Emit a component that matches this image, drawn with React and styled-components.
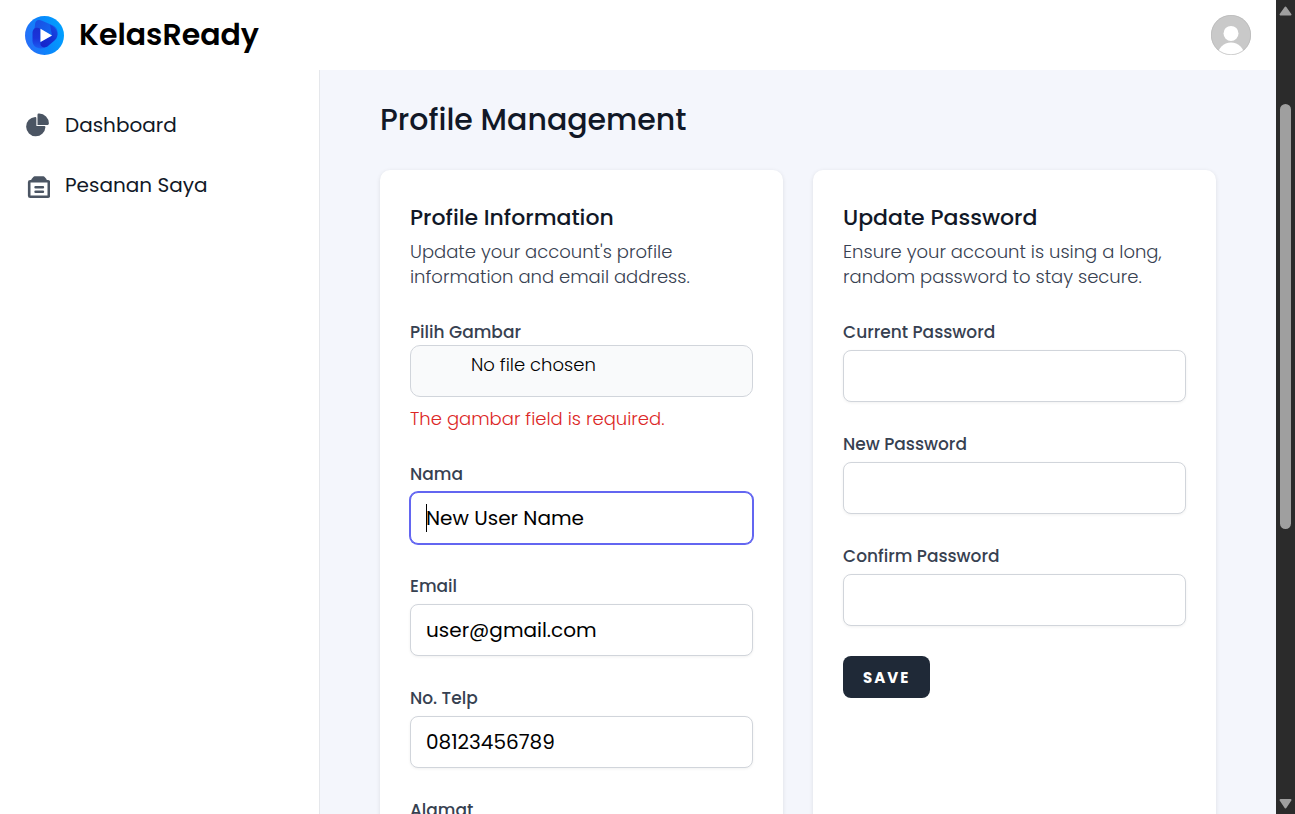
import React from "react";
import styled, { createGlobalStyle, css } from "styled-components";

const GlobalStyle = createGlobalStyle`
  *, *::before, *::after { box-sizing: border-box; }
  body {
    margin: 0;
    background: #ffffff;
    color: #111827;
    font-family: Poppins, Inter, "Open Sans", sans-serif;
  }
`;

const Window = styled.div`
  display: flex;
  height: 100vh;
  overflow: hidden;
`;

const Page = styled.div`
  flex: 1;
  min-width: 0;
  display: flex;
  flex-direction: column;
`;

const Header = styled.header`
  flex: none;
  display: flex;
  align-items: center;
  justify-content: space-between;
  height: 70px;
  padding: 0 25px;
  background: #ffffff;
`;

const Brand = styled.a`
  display: flex;
  align-items: center;
  gap: 15px;
  color: #000000;
  font-size: 30px;
  font-weight: 600;
  line-height: 40px;
  text-decoration: none;
`;

const AvatarButton = styled.button`
  display: block;
  width: 40px;
  height: 40px;
  padding: 0;
  border: 0;
  border-radius: 50%;
  background: none;
`;

const Body = styled.div`
  flex: 1;
  min-height: 0;
  display: flex;
`;

const Sidebar = styled.nav`
  flex: none;
  width: 320px;
  padding: 30px 15px;
  border-right: 1px solid #e5e7eb;
  background: #ffffff;
`;

const NavList = styled.ul`
  display: flex;
  flex-direction: column;
  gap: 10px;
  margin: 0;
  padding: 0;
  list-style: none;
`;

const NavLink = styled.a`
  display: flex;
  align-items: center;
  gap: 15px;
  height: 50px;
  padding: 0 10px;
  color: #111827;
  font-size: 20px;
  line-height: 30px;
  text-decoration: none;

  svg { flex: none; color: #4b5563; }
`;

const Main = styled.main`
  flex: 1;
  min-width: 0;
  padding: 30px 60px;
  overflow: hidden;
  background: #f4f6fc;
`;

const PageTitle = styled.h1`
  margin: 0 0 30px;
  font-size: 30px;
  font-weight: 500;
  line-height: 40px;
`;

const Cards = styled.div`
  display: grid;
  grid-template-columns: repeat(2, minmax(0, 1fr));
  gap: 30px;
`;

const Card = styled.section`
  padding: 30px;
  border-radius: 10px;
  background: #ffffff;
  box-shadow: 0 1px 4px rgba(0, 0, 0, 0.1);
`;

const CardTitle = styled.h2`
  margin: 0 0 4px;
  font-size: 22px;
  font-weight: 500;
  line-height: 35px;
`;

const CardText = styled.p`
  margin: 0;
  color: #374151;
  font-size: 18px;
  font-weight: 300;
  line-height: 25px;
`;

const Form = styled.form`
  display: flex;
  flex-direction: column;
  align-items: stretch;
  gap: 30px;
  margin-top: 31px;
`;

const FieldBox = styled.div`
  display: flex;
  flex-direction: column;
  gap: ${(p) => (p.$tight ? "0" : "5px")};
`;

const Label = styled.label`
  color: #374151;
  font-size: 17px;
  font-weight: 500;
  line-height: 25px;
`;

const InputWrap = styled.div`
  position: relative;
  display: flex;
`;

const TextInput = styled.input`
  width: 100%;
  height: 52px;
  padding: 0 15px;
  border: 1px solid #d1d5db;
  border-radius: 8px;
  outline: none;
  background: #ffffff;
  color: #000000;
  font-family: inherit;
  font-size: 20px;
  box-shadow: 0 1px 3px rgba(0, 0, 0, 0.06);

  ${(p) =>
    p.$active &&
    css`
      border-color: #6366f1;
      box-shadow: 0 0 0 1px #6366f1;
    `}
`;

const Caret = styled.span`
  position: absolute;
  top: 12px;
  left: 16px;
  width: 1px;
  height: 28px;
  background: #000000;
`;

const FileInput = styled.input`
  width: 100%;
  height: 52px;
  padding: 5px 0;
  border: 1px solid #d1d5db;
  border-radius: 10px;
  background: #f9fafb;
  color: #000000;
  font-family: inherit;
  font-size: 18px;
  font-weight: 300;
  line-height: 27px;

  &::file-selector-button {
    width: 60px;
    height: 27px;
    margin: 0;
    padding: 0;
    border: 0;
    opacity: 0;
  }
`;

const ErrorText = styled.p`
  margin: 9px 0 1px;
  color: #dc2626;
  font-size: 18px;
  font-weight: 300;
  line-height: 25px;
`;

const SaveButton = styled.button`
  align-self: flex-start;
  height: 42px;
  padding: 0 20px;
  border: 0;
  border-radius: 8px;
  background: #1f2937;
  color: #ffffff;
  font-family: inherit;
  font-size: 15px;
  font-weight: 700;
  letter-spacing: 2px;
  text-transform: uppercase;
`;

const ScrollRail = styled.div`
  flex: none;
  display: flex;
  flex-direction: column;
  align-items: center;
  width: 19px;
  background: #2b2b2b;

  svg { display: block; flex: none; }
`;

const RailSpace = styled.div`
  flex: ${(p) => p.$share} 0 0;
`;

const Thumb = styled.div`
  flex: ${(p) => p.$share} 0 0;
  width: 11px;
  border-radius: 6px;
  background: #9f9f9f;
`;

function Logo() {
  return (
    <svg width="39" height="39" viewBox="0 0 39 39" aria-hidden="true">
      <defs>
        <linearGradient id="disc" x1="0" y1="0.7" x2="1" y2="0.4">
          <stop offset="0" stopColor="#2a6cf8" />
          <stop offset="0.5" stopColor="#0a86fb" />
          <stop offset="1" stopColor="#00a0ff" />
        </linearGradient>
        <linearGradient id="left" x1="0" y1="0" x2="0" y2="1">
          <stop offset="0" stopColor="#1a2fd0" />
          <stop offset="0.5" stopColor="#1a34da" />
          <stop offset="1" stopColor="#1c5cf2" />
        </linearGradient>
        <linearGradient id="top" x1="0" y1="0" x2="1" y2="0.5">
          <stop offset="0" stopColor="#1c4be2" />
          <stop offset="1" stopColor="#0f6af2" />
        </linearGradient>
        <linearGradient id="right" x1="1" y1="0" x2="0" y2="1">
          <stop offset="0" stopColor="#1850e6" />
          <stop offset="0.5" stopColor="#1530d4" />
          <stop offset="1" stopColor="#1622c8" />
        </linearGradient>
      </defs>
      <circle cx="19.5" cy="19.5" r="19.5" fill="url(#disc)" />
      <path d="M10 9C10 4.500 13 3 17 4.700L28 9.500C32 11.500 33.500 15 32 19L27 19.500L15 12.500L9 16Z" fill="url(#top)" />
      <path d="M7.500 17.500C7.500 12.500 11 10.500 15.500 12.800V26C15.500 29 17 31 20 31.500C14 34 7.500 31 7.500 25Z" fill="url(#left)" />
      <path d="M25 8.500C33 12 35 20 29.500 24.500L23 30C19.500 33 14.500 31 15.500 26L27 19.500Z" fill="url(#right)" />
      <path d="M15.500 12.800V26L27 19.400Z" fill="#ffffff" />
    </svg>
  );
}

function Avatar() {
  return (
    <svg width="40" height="40" viewBox="0 0 40 40" aria-hidden="true">
      <defs>
        <clipPath id="avatar-clip"><circle cx="20" cy="20" r="20" /></clipPath>
      </defs>
      <g clipPath="url(#avatar-clip)">
        <rect width="40" height="40" fill="#c9c9c9" />
        <circle cx="20" cy="18.400" r="7.500" fill="#ffffff" />
        <ellipse cx="20" cy="41" rx="13.500" ry="13.500" fill="#ffffff" />
      </g>
      <circle cx="20" cy="20" r="19.700" fill="none" stroke="#b4b4b4" strokeWidth="0.600" />
    </svg>
  );
}

function PieIcon() {
  return (
    <svg width="25" height="25" viewBox="0 0 22 21" fill="currentColor" aria-hidden="true">
      <path d="M16.975 11H10V4.025a1 1 0 0 0-1.066-.998 8.500 8.500 0 1 0 9.039 9.039.999.999 0 0 0-1-1.066h.002Z" />
      <path d="M12.500 0c-.157 0-.311.010-.565.027A1 1 0 0 0 11 1.020V10h8.975a1 1 0 0 0 1-.935c.013-.188.028-.374.028-.565A8.510 8.510 0 0 0 12.500 0Z" />
    </svg>
  );
}

function OrdersIcon() {
  return (
    <svg width="25" height="28" viewBox="0 0 25 28" fill="none" stroke="currentColor" strokeLinejoin="round" strokeLinecap="round" aria-hidden="true">
      <rect x="4.200" y="10.200" width="19.600" height="15.600" rx="1" strokeWidth="2.600" />
      <path d="M7.500 8.800L9.500 6.400H18.500L20.500 8.800Z" strokeWidth="2.400" />
      <path d="M10.500 16.300H18M10.500 20.700H18" strokeWidth="2.400" />
    </svg>
  );
}

function Arrow({ down }) {
  return (
    <svg width="19" height="20" viewBox="0 0 19 20" aria-hidden="true">
      <path
        d={down ? "M4.500 6H14.500L9.500 13.500Z" : "M4.500 14.500H14.500L9.500 7.500Z"}
        fill="#9f9f9f"
        stroke="#9f9f9f"
        strokeWidth="2"
        strokeLinejoin="round"
      />
    </svg>
  );
}

function Field({ id, label, type = "text", value, active }) {
  return (
    <FieldBox>
      <Label htmlFor={id}>{label}</Label>
      <InputWrap>
        <TextInput id={id} type={type} defaultValue={value} $active={active} />
        {active && <Caret />}
      </InputWrap>
    </FieldBox>
  );
}

export default function App() {
  return (
    <>
      <GlobalStyle />
      <Window>
        <Page>
          <Header>
            <Brand href="#">
              <Logo />
              KelasReady
            </Brand>
            <AvatarButton type="button" aria-label="User menu">
              <Avatar />
            </AvatarButton>
          </Header>
          <Body>
            <Sidebar>
              <NavList>
                <li><NavLink href="#"><PieIcon />Dashboard</NavLink></li>
                <li><NavLink href="#"><OrdersIcon />Pesanan Saya</NavLink></li>
              </NavList>
            </Sidebar>
            <Main>
              <PageTitle>Profile Management</PageTitle>
              <Cards>
                <Card>
                  <CardTitle>Profile Information</CardTitle>
                  <CardText>Update your account's profile information and email address.</CardText>
                  <Form>
                    <FieldBox $tight>
                      <Label htmlFor="gambar">Pilih Gambar</Label>
                      <FileInput id="gambar" type="file" />
                      <ErrorText>The gambar field is required.</ErrorText>
                    </FieldBox>
                    <Field id="nama" label="Nama" value="New User Name" active />
                    <Field id="email" label="Email" type="email" value="user@gmail.com" />
                    <Field id="telp" label="No. Telp" type="tel" value="08123456789" />
                    <Field id="alamat" label="Alamat" />
                  </Form>
                </Card>
                <Card>
                  <CardTitle>Update Password</CardTitle>
                  <CardText>Ensure your account is using a long, random password to stay secure.</CardText>
                  <Form>
                    <Field id="current" label="Current Password" type="password" />
                    <Field id="new" label="New Password" type="password" />
                    <Field id="confirm" label="Confirm Password" type="password" />
                    <SaveButton type="button">Save</SaveButton>
                  </Form>
                </Card>
              </Cards>
            </Main>
          </Body>
        </Page>
        <ScrollRail aria-hidden="true">
          <Arrow />
          <RailSpace $share={84} />
          <Thumb $share={425} />
          <RailSpace $share={265} />
          <Arrow down />
        </ScrollRail>
      </Window>
    </>
  );
}
